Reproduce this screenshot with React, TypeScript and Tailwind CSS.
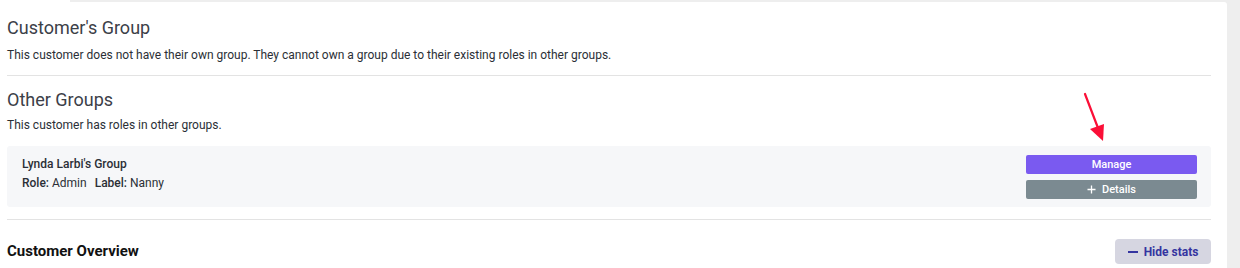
import React from "react";

export default function App() {
  return (
    <div
      className="w-[1240px] h-[268px] overflow-hidden bg-[#eeeeee] flex flex-col"
      style={{ fontFamily: "Roboto, 'Liberation Sans', sans-serif" }}
    >
      <div className="h-[2px] flex shrink-0">
        <div className="w-[70px] bg-white" />
      </div>
      <div className="flex flex-1">
        <div className="w-[1227px] bg-white rounded-tr-[3px] pl-[7px] pr-[16px] relative">
          <h2 className="mt-[15px] text-[18px] leading-[22px] text-[#3c4048] font-normal">Customer's Group</h2>
          <p className="mt-[8px] text-[12px] leading-[16px] text-[#2b2f36]">
            This customer does not have their own group. They cannot own a group due to their existing roles in other groups.
          </p>
          <div className="mt-[12px] h-px bg-[#e3e3e3]" />
          <h2 className="mt-[13px] text-[18px] leading-[22px] text-[#3c4048] font-normal">Other Groups</h2>
          <p className="mt-[6px] text-[12px] leading-[16px] text-[#2b2f36]">This customer has roles in other groups.</p>
          <div className="mt-[13px] h-[61px] bg-[#f6f7f9] rounded-[3px] flex justify-between pl-[15px] pr-[14px] pt-[9px]">
            <div className="text-[12px] text-[#2b2f36] pt-[1px]">
              <div className="leading-[16px] font-medium">Lynda Larbi's Group</div>
              <div className="leading-[16px] mt-[3px]">
                <span className="font-medium">Role:</span> Admin
                <span className="ml-[8px] font-medium">Label:</span> Nanny
              </div>
            </div>
            <div className="flex flex-col gap-[6px] w-[171px]">
              <button className="h-[19px] rounded-[2px] bg-[#7a5af0] text-white text-[11px] font-medium leading-[19px]">
                Manage
              </button>
              <button className="h-[19px] rounded-[2px] bg-[#7b8a91] text-white text-[11px] font-medium leading-[19px] flex items-center justify-center gap-[6px]">
                <svg width="9" height="9" viewBox="0 0 9 9">
                  <path d="M4.5 0.5v8M0.5 4.5h8" stroke="white" strokeWidth="1.3" />
                </svg>
                Details
              </button>
            </div>
          </div>
          <div className="mt-[12px] h-px bg-[#e3e3e3]" />
          <div className="mt-[19px] flex justify-between items-start">
            <div className="mt-[2px] text-[15px] font-bold text-[#111111] leading-[20px]">Customer Overview</div>
            <button className="w-[96px] h-[25px] rounded-[4px] bg-[#d6d6e1] text-[#3434a0] text-[12px] font-bold flex items-center justify-center gap-[6px]">
              <svg width="10" height="2" viewBox="0 0 10 2">
                <rect width="10" height="2" fill="#3434a0" />
              </svg>
              Hide stats
            </button>
          </div>
          <svg className="absolute left-[1078px] top-[89px]" width="34" height="54" viewBox="0 0 34 54">
            <line x1="7" y1="3" x2="20" y2="37" stroke="#fb0f37" strokeWidth="2.2" strokeLinecap="round" />
            <polygon points="12,38 26,33 25,50" fill="#fb0f37" />
          </svg>
        </div>
      </div>
    </div>
  );
}
